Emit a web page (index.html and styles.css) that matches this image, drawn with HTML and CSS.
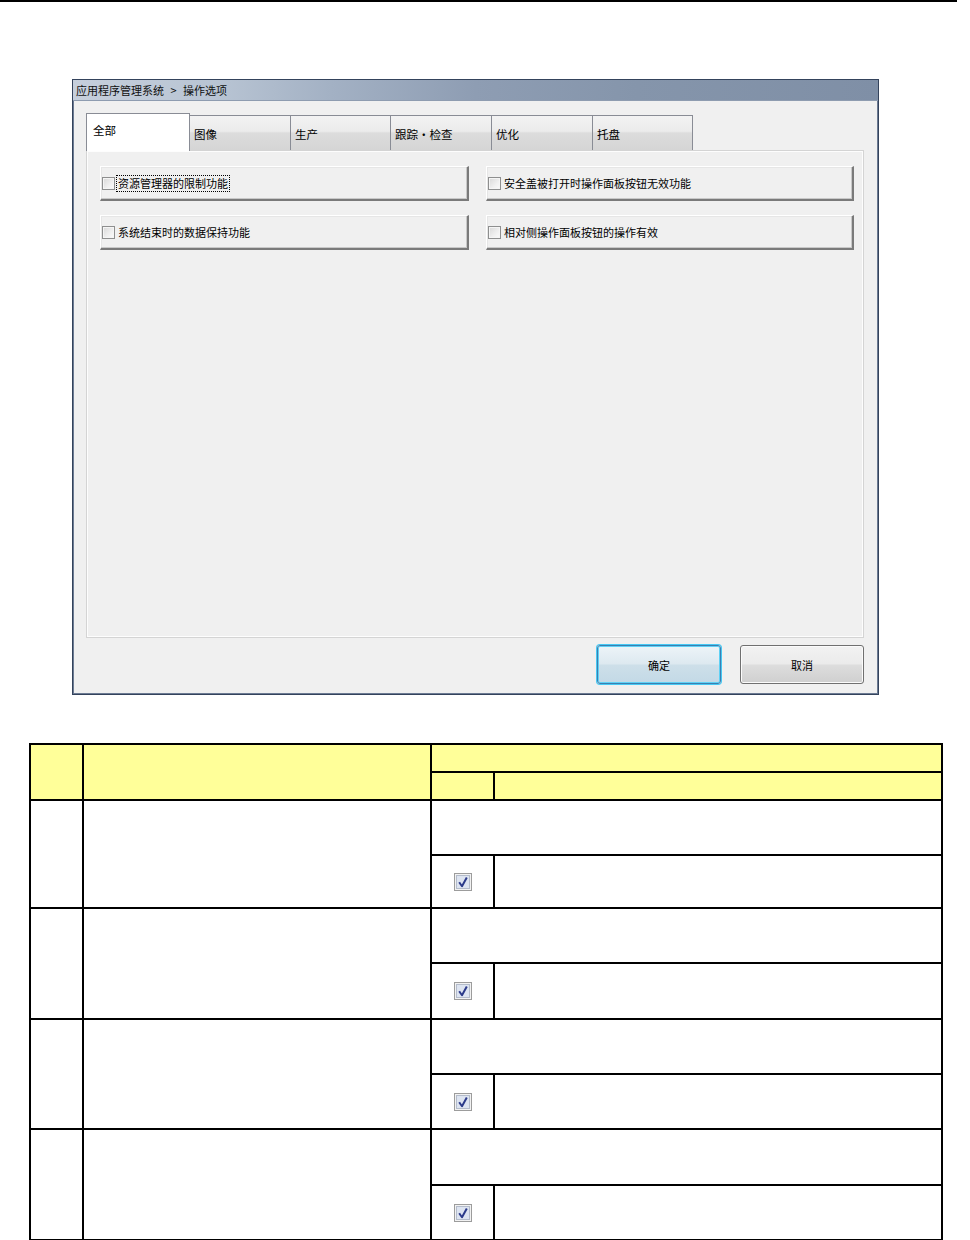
FILE: index.html
```html
<!DOCTYPE html>
<html lang="zh-CN">
<head>
<meta charset="utf-8">
<title>操作选项</title>
<link rel="stylesheet" href="styles.css">
</head>
<body>
<div class="topline"></div>

<div class="dialog">
  <div class="titlebar">应用程序管理系统 &gt; 操作选项</div>
  <div class="dbody">
    <div class="tabs">
      <div class="tab active">全部</div>
      <div class="tab t2">图像</div>
      <div class="tab t3">生产</div>
      <div class="tab t4">跟踪・检查</div>
      <div class="tab t5">优化</div>
      <div class="tab t6">托盘</div>
    </div>
    <div class="panel">
      <div class="opts">
        <div class="opt"><span class="cb"></span><span class="lbl focus">资源管理器的限制功能</span></div>
        <div class="opt"><span class="cb"></span><span class="lbl">安全盖被打开时操作面板按钮无效功能</span></div>
        <div class="opt"><span class="cb"></span><span class="lbl">系统结束时的数据保持功能</span></div>
        <div class="opt"><span class="cb"></span><span class="lbl">相对侧操作面板按钮的操作有效</span></div>
      </div>
    </div>
    <div class="actions">
      <div class="btn primary">确定</div>
      <div class="btn">取消</div>
    </div>
  </div>
</div>

<table class="spec">
  <colgroup>
    <col class="c1"><col class="c2"><col class="c3"><col class="c4">
  </colgroup>
  <tr class="h"><th rowspan="2"></th><th rowspan="2"></th><th colspan="2"></th></tr>
  <tr class="h"><th></th><th></th></tr>

  <tr class="u1"><td rowspan="2"></td><td rowspan="2"></td><td colspan="2"></td></tr>
  <tr class="l1"><td class="ic"><svg class="chk" width="18" height="18" viewBox="0 0 18 18"><rect x="0.5" y="0.5" width="17" height="17" fill="#f2f2f2" stroke="#9c9c9c"/><rect x="2.5" y="2.5" width="13" height="13" fill="#dde4f1" stroke="#b4bccb"/><path d="M5.2 9.2 L8 13.2 L12.8 4.6" stroke="#2b3a8a" stroke-width="2" fill="none" stroke-linejoin="round"/></svg></td><td></td></tr>

  <tr class="u2"><td rowspan="2"></td><td rowspan="2"></td><td colspan="2"></td></tr>
  <tr class="l2"><td class="ic"><svg class="chk" width="18" height="18" viewBox="0 0 18 18"><rect x="0.5" y="0.5" width="17" height="17" fill="#f2f2f2" stroke="#9c9c9c"/><rect x="2.5" y="2.5" width="13" height="13" fill="#dde4f1" stroke="#b4bccb"/><path d="M5.2 9.2 L8 13.2 L12.8 4.6" stroke="#2b3a8a" stroke-width="2" fill="none" stroke-linejoin="round"/></svg></td><td></td></tr>

  <tr class="u3"><td rowspan="2"></td><td rowspan="2"></td><td colspan="2"></td></tr>
  <tr class="l3"><td class="ic"><svg class="chk" width="18" height="18" viewBox="0 0 18 18"><rect x="0.5" y="0.5" width="17" height="17" fill="#f2f2f2" stroke="#9c9c9c"/><rect x="2.5" y="2.5" width="13" height="13" fill="#dde4f1" stroke="#b4bccb"/><path d="M5.2 9.2 L8 13.2 L12.8 4.6" stroke="#2b3a8a" stroke-width="2" fill="none" stroke-linejoin="round"/></svg></td><td></td></tr>

  <tr class="u4"><td rowspan="2"></td><td rowspan="2"></td><td colspan="2"></td></tr>
  <tr class="l4"><td class="ic"><svg class="chk" width="18" height="18" viewBox="0 0 18 18"><rect x="0.5" y="0.5" width="17" height="17" fill="#f2f2f2" stroke="#9c9c9c"/><rect x="2.5" y="2.5" width="13" height="13" fill="#dde4f1" stroke="#b4bccb"/><path d="M5.2 9.2 L8 13.2 L12.8 4.6" stroke="#2b3a8a" stroke-width="2" fill="none" stroke-linejoin="round"/></svg></td><td></td></tr>
</table>
</body>
</html>
```

FILE: styles.css
```css
* { box-sizing: border-box; }

body {
  margin: 0;
  background: #fff;
  font-family: "Noto Sans CJK SC", "Liberation Sans", sans-serif;
  font-size: 11px;
  color: #000;
}

.topline {
  width: 957px;
  height: 2px;
  background: #000;
}

/* ---------- dialog ---------- */
.dialog {
  width: 807px;
  height: 616px;
  margin: 77px 0 0 72px;
  border: 1px solid #34435c;
  box-shadow: inset 1px 0 0 #6c7b93, inset -1px 0 0 #6c7b93, inset 0 -1px 0 #6c7b93;
  background: #f0f0f0;
  display: flex;
  flex-direction: column;
}

.titlebar {
  height: 21px;
  flex: none;
  padding: 2px 0 0 3px;
  line-height: 16px;
  font-size: 11px;
  word-spacing: 4px;
  color: #101010;
  background: linear-gradient(to right, #c6cfdc 0%, #b8c4d3 18%, #a3b1c4 32%, #8e9db3 50%, #8595ab 70%, #7f8fa6 100%);
  border-bottom: 1px solid #8e9cb0;
}

.dbody {
  flex: 1;
  display: flex;
  flex-direction: column;
  padding: 12px 14px 10px 13px;
}

/* tabs */
.tabs {
  display: flex;
  align-items: flex-end;
  height: 37px;
  flex: none;
  position: relative;
  z-index: 1;
}

.tab {
  width: 102px;
  height: 35px;
  padding: 10px 0 0 4px;
  line-height: 16px;
  font-size: 11.5px;
  border: 1px solid #898c95;
  border-bottom: none;
  margin-left: -1px;
  background: linear-gradient(to bottom, #f3f3f3 0%, #ebebeb 45%, #dcdcdc 50%, #d5d5d5 100%);
}

.tab.t3, .tab.t6 { width: 101px; }

.tab.active {
  width: 104px;
  height: 38px;
  margin-left: 0;
  margin-bottom: -1px;
  padding: 8px 0 0 6px;
  background: #fff;
  position: relative;
  z-index: 2;
}

.panel {
  height: 488px;
  flex: none;
  border: 1px solid #d4d4d4;
  box-shadow: inset 1px 1px 0 #fdfdfd, inset -1px -1px 0 #fdfdfd;
  background: #f0f0f0;
  padding: 15px 0 0 13px;
}

.opts {
  display: grid;
  grid-template-columns: 369px 368px;
  grid-auto-rows: 35px;
  column-gap: 17px;
  row-gap: 14px;
}

.opt {
  display: flex;
  align-items: center;
  gap: 2px;
  padding-left: 1px;
  background: #f0f0f0;
  border-top: 1px solid #fff;
  border-left: 1px solid #fff;
  border-right: 2px solid #7a7a7a;
  border-bottom: 2px solid #7a7a7a;
  box-shadow: inset -1px -1px 0 #c8c8c8, inset 1px 1px 0 #e6e6e6;
}

.cb {
  width: 13px;
  height: 13px;
  flex: none;
  border: 1px solid #8e8f8f;
  background: linear-gradient(135deg, #d8d8d8 0%, #f0f0f0 60%, #fbfbfb 100%);
  box-shadow: inset 0 0 0 1px #f5f5f5;
}

.lbl {
  line-height: 15px;
  padding: 0 1px;
}

.lbl.focus {
  outline: 1px dotted #000;
  outline-offset: 0;
}

/* buttons */
.actions {
  flex: none;
  margin-top: 7px;
  display: flex;
  justify-content: flex-end;
  gap: 19px;
}

.btn {
  width: 124px;
  height: 39px;
  border: 1px solid #707070;
  border-radius: 3px;
  display: flex;
  align-items: center;
  justify-content: center;
  background: linear-gradient(to bottom, #f2f2f2 0%, #ebebeb 48%, #dddddd 52%, #cfcfcf 100%);
  box-shadow: inset 0 0 0 1px #fbfbfb;
}

.btn.primary {
  border-color: #3c7fb1;
  box-shadow: 0 0 0 1px #45c8f3, inset 0 0 0 1px #5fd1f5;
  background: linear-gradient(to bottom, #edf4f8 0%, #dde9f0 48%, #cddfe9 52%, #c3d9e6 100%);
}

/* ---------- table ---------- */
.spec {
  margin: 48px 0 0 29px;
  border-collapse: collapse;
  table-layout: fixed;
  width: 912px;
}

.spec col.c1 { width: 53px; }
.spec col.c2 { width: 348px; }
.spec col.c3 { width: 63px; }
.spec col.c4 { width: 448px; }

.spec th,
.spec td {
  border: 2px solid #000;
  padding: 0;
}

.spec th { background: #ffff99; }

.spec tr.h { height: 28px; }
.spec tr.u1 { height: 55px; }
.spec tr.l1 { height: 53px; }
.spec tr.u2 { height: 55px; }
.spec tr.l2 { height: 56px; }
.spec tr.u3 { height: 55px; }
.spec tr.l3 { height: 55px; }
.spec tr.u4 { height: 56px; }
.spec tr.l4 { height: 55px; }

.spec td.ic {
  text-align: center;
  vertical-align: middle;
}

.chk { display: block; margin: 0 auto; }
```
